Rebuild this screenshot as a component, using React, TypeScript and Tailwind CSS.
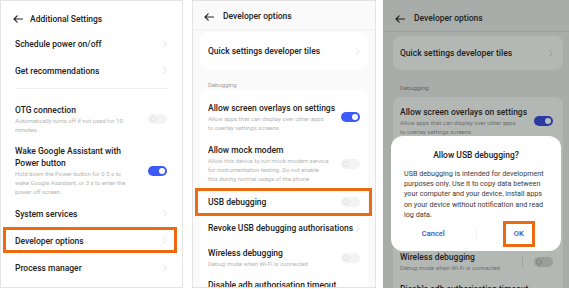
type Tone = { dim?: boolean };

const font = { fontFamily: "Roboto, 'Noto Sans', sans-serif" };

function BackArrow({ dim }: Tone) {
  return (
    <svg width="10" height="8" viewBox="0 0 10 8" className="shrink-0">
      <path
        d="M9.5 4H1M4.2 0.8L1 4l3.2 3.2"
        fill="none"
        stroke={dim ? "#1d1f1e" : "#222222"}
        strokeWidth="1.1"
        strokeLinecap="round"
        strokeLinejoin="round"
      />
    </svg>
  );
}

function Chevron({ dim }: Tone) {
  return (
    <svg width="4" height="7" viewBox="0 0 4 7" className="shrink-0">
      <path
        d="M0.6 0.6L3.4 3.5 0.6 6.4"
        fill="none"
        stroke={dim ? "#8f9390" : "#dedede"}
        strokeWidth="0.9"
        strokeLinecap="round"
        strokeLinejoin="round"
      />
    </svg>
  );
}

function Toggle({ on, dim }: { on?: boolean } & Tone) {
  if (on) {
    return (
      <div
        className={`flex h-[10px] w-[19px] shrink-0 items-center justify-end rounded-full pr-[2px] ${
          dim ? "bg-[#2a3aa0]" : "bg-[#3c5af5]"
        }`}
      >
        <div className={`h-[6px] w-[6px] rounded-full ${dim ? "bg-[#b7bac3]" : "bg-white"}`} />
      </div>
    );
  }
  return (
    <div
      className={`flex h-[10px] w-[19px] shrink-0 items-center rounded-full pl-[2px] ${
        dim ? "bg-[#9a9e9b]" : "bg-[#f3f3f3]"
      }`}
    >
      <div
        className={`h-[6px] w-[6px] rounded-full border ${
          dim ? "border-[#7f8380]" : "border-[#e3e3e3]"
        }`}
      />
    </div>
  );
}

function Highlight({ className }: { className: string }) {
  return <span className={`pointer-events-none absolute border-[3px] border-[#ee6a10] ${className}`} />;
}

function Title({ children, dim }: { children: React.ReactNode } & Tone) {
  return (
    <div
      className={`whitespace-nowrap text-[8.5px] font-medium leading-[12px] ${
        dim ? "text-[#1c1e1d]" : "text-[#222222]"
      }`}
    >
      {children}
    </div>
  );
}

function Sub({ lines, dim }: { lines: string[] } & Tone) {
  return (
    <div className={`text-[6px] leading-[9px] ${dim ? "text-[#6d716e]" : "text-[#b4b4b4]"}`}>
      {lines.map((line) => (
        <div key={line} className="whitespace-nowrap">
          {line}
        </div>
      ))}
    </div>
  );
}

function SettingsPanel() {
  return (
    <div className="flex h-[288px] w-[183px] shrink-0 flex-col overflow-hidden border border-[#e3e3e3] bg-white">
      <div className="flex h-[29px] shrink-0 items-center gap-[7px] pl-[12px] pt-[7px]">
        <BackArrow />
        <span className="text-[8.5px] font-medium text-[#222222]">Additional Settings</span>
      </div>

      <div className="flex h-[27px] shrink-0 items-center justify-between pl-[14px] pr-[15px]">
        <Title>Schedule power on/off</Title>
        <Chevron />
      </div>
      <div className="flex h-[27px] shrink-0 items-center justify-between pl-[14px] pr-[15px]">
        <Title>Get recommendations</Title>
        <Chevron />
      </div>
      <div className="mx-[14px] mt-[4px] h-px shrink-0 bg-[#f1f1f1]" />

      <div className="mt-[15px] flex shrink-0 items-center justify-between pl-[14px] pr-[15px]">
        <div>
          <Title>OTG connection</Title>
          <Sub lines={["Automatically turns off if not used for 10", "minutes."]} />
        </div>
        <Toggle />
      </div>

      <div className="mt-[11px] flex shrink-0 items-center justify-between pl-[14px] pr-[15px]">
        <div>
          <Title>Wake Google Assistant with</Title>
          <Title>Power button</Title>
          <Sub
            lines={[
              "Hold down the Power button for 0.5 s to",
              "wake Google Assistant, or 3 s to enter the",
              "power off screen.",
            ]}
          />
        </div>
        <Toggle on />
      </div>

      <div className="mt-[4px] flex h-[27px] shrink-0 items-center justify-between pl-[14px] pr-[15px]">
        <Title>System services</Title>
        <Chevron />
      </div>
      <div className="relative flex h-[27px] shrink-0 items-center justify-between pl-[14px] pr-[15px]">
        <Title>Developer options</Title>
        <Chevron />
        <Highlight className="bottom-[1px] left-[2px] right-[5px] top-0" />
      </div>
      <div className="flex h-[27px] shrink-0 items-center justify-between pl-[14px] pr-[15px]">
        <Title>Process manager</Title>
        <Chevron />
      </div>
    </div>
  );
}

function DeveloperPanel({ dim }: Tone) {
  const cardMargin = dim ? "ml-[10px] mr-[6px]" : "mx-[7px]";
  const cardPad = dim ? "pl-[7px] pr-[10px]" : "px-[8px]";
  const cardBg = dim ? "bg-[#b4b8b5]" : "bg-white";
  // rows hidden behind the dialog in the dimmed copy
  const covered = dim ? "invisible" : "";

  return (
    <>
      <div
        className={`flex shrink-0 items-center gap-[9px] border-b ${
          dim
            ? "h-[32px] border-[#9ea29f] pl-[12px] pt-[6px]"
            : "h-[29px] border-[#f0f0f0] pl-[11px] pt-[3px]"
        }`}
      >
        <BackArrow dim={dim} />
        <span className={`text-[8.5px] font-medium ${dim ? "text-[#1c1e1d]" : "text-[#222222]"}`}>
          Developer options
        </span>
      </div>

      <div
        className={`flex shrink-0 items-center justify-between rounded-[8px] ${cardMargin} ${cardPad} ${cardBg} ${
          dim ? "mt-[4px] h-[34px]" : "mt-[2px] h-[38px]"
        }`}
      >
        <Title dim={dim}>Quick settings developer tiles</Title>
        <Chevron dim={dim} />
      </div>

      <div
        className={`shrink-0 text-[6px] leading-[10px] ${
          dim ? "h-[27px] pl-[17px] pt-[13px] text-[#5f6360]" : "h-[20px] pl-[15px] pt-[10px] text-[#9a9a9a]"
        }`}
      >
        Debugging
      </div>

      <div className={`flex shrink-0 flex-col rounded-t-[8px] ${cardMargin} ${cardBg}`}>
        <div className={`flex items-center justify-between ${cardPad} ${dim ? "pt-[9px]" : "pt-[12px]"}`}>
          <div>
            <Title dim={dim}>Allow screen overlays on settings</Title>
            <Sub dim={dim} lines={["Allow apps that can display over other apps", "to overlay settings screens"]} />
          </div>
          <Toggle on dim={dim} />
        </div>

        <div className={`flex items-center justify-between pb-[4px] pt-[12px] ${cardPad} ${covered}`}>
          <div>
            <Title dim={dim}>Allow mock modem</Title>
            <Sub
              dim={dim}
              lines={[
                "Allow this device to run mock modem service",
                "for instrumentation testing. Do not enable",
                "this during normal usage of the phone",
              ]}
            />
          </div>
          <Toggle dim={dim} />
        </div>

        <div className={`relative flex h-[29px] items-center justify-between ${cardPad} ${covered}`}>
          <Title dim={dim}>USB debugging</Title>
          <Toggle dim={dim} />
          {!dim && <Highlight className="bottom-0 left-[-5px] right-[-4px] top-[1px]" />}
        </div>

        <div className={`flex h-[24px] items-center justify-between ${cardPad} ${covered}`}>
          <Title dim={dim}>Revoke USB debugging authorisations</Title>
          <Chevron dim={dim} />
        </div>

        <div className={`flex items-center justify-between pt-[7px] ${cardPad}`}>
          <div>
            <Title dim={dim}>Wireless debugging</Title>
            <Sub dim={dim} lines={["Debug mode when Wi-Fi is connected"]} />
          </div>
          <div className="flex items-center gap-[11px]">
            {dim && <div className="h-[11px] w-px bg-[#9ea29f]" />}
            <Toggle dim={dim} />
          </div>
        </div>

        <div className={`pt-[11px] ${cardPad}`}>
          <Title dim={dim}>Disable adb authorisation timeout</Title>
        </div>
      </div>
    </>
  );
}

function UsbDialog() {
  const lines = [
    "USB debugging is intended for development",
    "purposes only. Use it to copy data between",
    "your computer and your device, install apps",
    "on your device without notification and read",
    "log data.",
  ];
  return (
    <div className="absolute left-[8px] top-[136px] flex h-[115px] w-[170px] flex-col rounded-[12px] bg-white">
      <div className="pt-[13px] text-center text-[8.5px] font-medium leading-[12px] text-[#222222]">
        Allow USB debugging?
      </div>
      <div className="mt-[8px] pl-[13px] text-[7.2px] leading-[10.2px] text-[#3a3a3a]">
        {lines.map((line) => (
          <div key={line} className="whitespace-nowrap">
            {line}
          </div>
        ))}
      </div>
      <div className="mt-[0.5px] flex h-[26px] items-center">
        <div className="flex flex-1 justify-center text-[7.5px] font-medium text-[#3d50c2]">Cancel</div>
        <div className="h-[10px] w-px bg-[#efefef]" />
        <div className="flex flex-1 justify-center">
          <div className="flex h-[26px] w-[32px] items-center justify-center border-[3px] border-[#ee6a10] text-[7.5px] font-medium text-[#3d50c2]">
            OK
          </div>
        </div>
      </div>
    </div>
  );
}

export default function App() {
  return (
    <div className="flex h-[289px] w-[569px] items-start bg-white" style={font}>
      <SettingsPanel />

      <div className="ml-[9px] flex h-[288px] w-[184px] shrink-0 flex-col overflow-hidden border border-[#e3e3e3] bg-[#fafafa]">
        <DeveloperPanel />
      </div>

      <div className="relative ml-[7px] flex h-[288px] w-[186px] shrink-0 flex-col overflow-hidden bg-[#a9adaa]">
        <DeveloperPanel dim />
        <UsbDialog />
      </div>
    </div>
  );
}
